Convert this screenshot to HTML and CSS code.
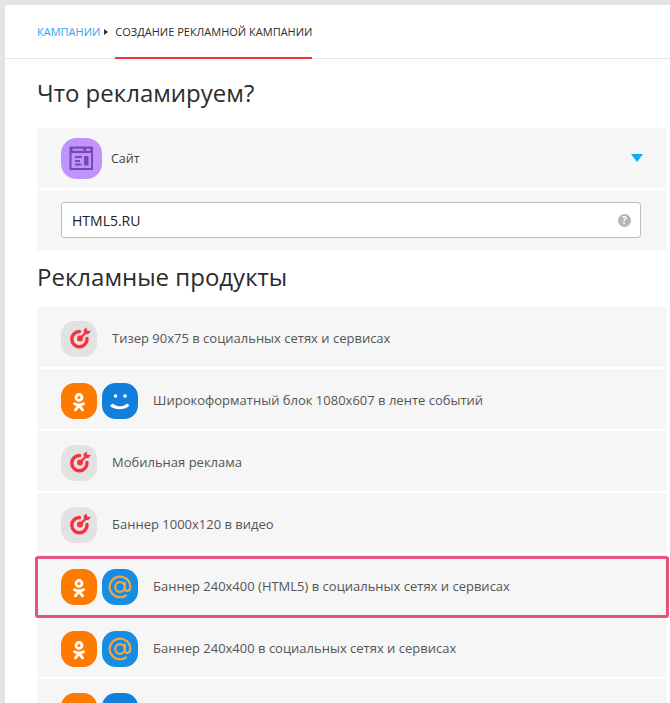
FILE: index.html
```html
<!DOCTYPE html>
<html lang="ru">
<head>
  <meta charset="UTF-8" />
  <meta name="viewport" content="width=device-width, initial-scale=1" />
  <title>Создание рекламной кампании</title>
  <link rel="stylesheet" href="styles.css">
</head>
<body>
  <div class="panel">
    <div class="crumbs">
      <a class="crumb-link">Кампании</a>
      <span class="crumb-arrow"></span>
      <span class="crumb-current">Создание рекламной кампании</span>
    </div>

    <div class="content">
      <h2>Что рекламируем?</h2>

      <div class="row row-select">
        <span class="icon icon-big icon-purple">
          <svg viewBox="0 0 41 41" width="41" height="41">
            <path fill="#7a45b5" fill-rule="evenodd" d="M8.500 8.500h23.500v23.500H8.500z M10.500 15v15h19.500V15z M11.500 10.800v2h11v-2z M25 10.800v2h4.500v-2z"/>
            <path fill="#7a45b5" d="M14 18h7v2h-7z M14 22h5v2h-5z M14 25.500h6.500v2H14z M23 18h4.500v9.500H23z"/>
          </svg>
        </span>
        <span class="row-text">Сайт</span>
        <span class="select-arrow"></span>
      </div>

      <div class="row row-input">
        <div class="url-box">
          <span class="url-value">HTML5.RU</span>
          <span class="hint">?</span>
        </div>
      </div>

      <h2 class="second">Рекламные продукты</h2>

      <div class="products">
        <div class="row">
          <span class="icon icon-grey">
            <svg viewBox="0 0 36 36" width="36" height="36"><use href="#target"/></svg>
          </span>
          <span class="row-text">Тизер 90x75 в социальных сетях и сервисах</span>
        </div>
        <div class="row">
          <span class="icon icon-orange">
            <svg viewBox="0 0 36 36" width="36" height="36"><use href="#ok"/></svg>
          </span>
          <span class="icon icon-blue-dark">
            <svg viewBox="0 0 36 36" width="36" height="36"><use href="#smile"/></svg>
          </span>
          <span class="row-text">Широкоформатный блок 1080x607 в ленте событий</span>
        </div>
        <div class="row">
          <span class="icon icon-grey">
            <svg viewBox="0 0 36 36" width="36" height="36"><use href="#target"/></svg>
          </span>
          <span class="row-text">Мобильная реклама</span>
        </div>
        <div class="row">
          <span class="icon icon-grey">
            <svg viewBox="0 0 36 36" width="36" height="36"><use href="#target"/></svg>
          </span>
          <span class="row-text">Баннер 1000x120 в видео</span>
        </div>
        <div class="row row-marked">
          <span class="icon icon-orange">
            <svg viewBox="0 0 36 36" width="36" height="36"><use href="#ok"/></svg>
          </span>
          <span class="icon icon-blue">
            <svg viewBox="0 0 36 36" width="36" height="36"><use href="#at"/></svg>
          </span>
          <span class="row-text">Баннер 240x400 (HTML5) в социальных сетях и сервисах</span>
        </div>
        <div class="row">
          <span class="icon icon-orange">
            <svg viewBox="0 0 36 36" width="36" height="36"><use href="#ok"/></svg>
          </span>
          <span class="icon icon-blue">
            <svg viewBox="0 0 36 36" width="36" height="36"><use href="#at"/></svg>
          </span>
          <span class="row-text">Баннер 240x400 в социальных сетях и сервисах</span>
        </div>
        <div class="row">
          <span class="icon icon-orange">
            <svg viewBox="0 0 36 36" width="36" height="36"><use href="#ok"/></svg>
          </span>
          <span class="icon icon-blue-dark">
            <svg viewBox="0 0 36 36" width="36" height="36"><use href="#smile"/></svg>
          </span>
        </div>
      </div>
    </div>
  </div>

  <svg class="defs" width="0" height="0">
    <defs>
      <g id="target">
        <path fill="none" stroke="#f7323f" stroke-width="3.400" stroke-linecap="round" d="M18.500 10.500A7.600 7.600 0 1 0 26 17.500"/>
        <path fill="none" stroke="#f7323f" stroke-width="2.400" stroke-linecap="round" d="M19 17.500L25.500 11"/>
        <circle cx="19" cy="17.500" r="3" fill="#f7323f"/>
        <path fill="#f7323f" d="M22.500 9l3-2.500.8 3.200 3.700.3-2.800 3.200-4-.5z"/>
      </g>
      <g id="ok" fill="none" stroke="#fff" stroke-width="2.800" stroke-linecap="round">
        <circle cx="18" cy="14.500" r="3"/>
        <path d="M13.500 20.800c3 1.700 6 1.700 9 0"/>
        <path d="M18 22.300l-3.600 4.500M18 22.300l3.600 4.500"/>
      </g>
      <g id="smile" fill="#fff">
        <circle cx="13.500" cy="13" r="1.800"/>
        <circle cx="23" cy="13" r="1.800"/>
        <path d="M8.500 22.500c1-1.200 1.800-1.800 2.800-1.600 4.400 3.200 9 3.200 13.400 0 1-.2 1.800.4 2.800 1.600-.8.100-1.300.6-1.600 1.600-5.400 3-11 3-16.800 0-.3-1-.8-1.500-1.600-1.600z"/>
      </g>
      <g id="at" fill="none" stroke="#f5a540" stroke-width="2.200">
        <circle cx="18" cy="18" r="4.800"/>
        <path stroke-linecap="round" d="M22.800 13.500v6c0 3.600 5.500 3.200 5.500-1.500A10.300 10.300 0 1 0 24 26.300"/>
      </g>
    </defs>
  </svg>
</body>
</html>
```

FILE: styles.css
```css
html, body {
  height: 100%;
}

body {
  margin: 0;
  padding: 5px 0 0 5px;
  box-sizing: border-box;
  overflow: hidden;
  background: #e4e4e4;
  font-family: "Open Sans", "Noto Sans", sans-serif;
  color: #333;
}

.panel {
  background: #fff;
  height: 100%;
  border-top-left-radius: 2px;
}

.crumbs {
  display: flex;
  align-items: center;
  box-sizing: border-box;
  height: 54px;
  padding-left: 32px;
  border-bottom: 1px solid #e6e6e6;
  font-size: 11px;
  text-transform: uppercase;
}

.crumb-link {
  color: #2ba4f0;
}

.crumb-arrow {
  width: 0;
  height: 0;
  margin: 0 7px 0 4px;
  border-left: 4px solid #333;
  border-top: 3px solid transparent;
  border-bottom: 3px solid transparent;
}

.crumb-current {
  align-self: stretch;
  display: flex;
  align-items: center;
  color: #2c2c2c;
  border-bottom: 2px solid #f7323f;
  margin-bottom: -1px;
}

.content {
  padding: 0 3px 0 32px;
}

h2 {
  margin: 0;
  padding: 17px 0 19px;
  font-size: 24px;
  line-height: 33px;
  font-weight: 400;
  color: #2c2c2c;
}

h2.second {
  padding: 8px 0 14px;
}

.row {
  display: flex;
  align-items: center;
  gap: 5px;
  box-sizing: border-box;
  height: 60px;
  padding-left: 24px;
  margin-bottom: 2px;
  background: #f6f6f6;
}

.products .row {
  padding-top: 4px;
}

.products .row-text {
  margin-bottom: 2px;
}

.row-text {
  font-size: 13px;
  color: #555;
  margin-left: 10px;
}

.icon {
  flex: none;
  display: flex;
  align-items: center;
  justify-content: center;
  width: 36px;
  height: 36px;
  border-radius: 38%;
}

.icon-big {
  width: 41px;
  height: 41px;
}

.icon-purple { background: #bf95fb; }
.icon-grey { background: #e2e2e2; }
.icon-orange { background: #ff7a00; }
.icon-blue { background: #168de2; }
.icon-blue-dark { background: #127fdc; }

.row-select .row-text {
  color: #444;
  font-size: 12.5px;
  margin-left: 4px;
}

.select-arrow {
  margin-left: auto;
  margin-right: 24px;
  width: 0;
  height: 0;
  border-left: 6px solid transparent;
  border-right: 6px solid transparent;
  border-top: 8px solid #0ab0f5;
}

.row-input {
  padding-right: 26px;
}

.url-box {
  flex: 1;
  display: flex;
  align-items: center;
  justify-content: space-between;
  box-sizing: border-box;
  height: 36px;
  padding: 0 9px 0 10px;
  background: #fff;
  border: 1px solid #bdbdbd;
  border-radius: 3px;
}

.url-value {
  font-size: 14px;
  color: #222;
}

.hint {
  width: 13px;
  height: 13px;
  border-radius: 50%;
  background: #b5b5b5;
  color: #fff;
  font-size: 10px;
  font-weight: 700;
  line-height: 13px;
  text-align: center;
}

.row-marked {
  position: relative;
}

.row-marked::after {
  content: "";
  position: absolute;
  left: -2px;
  right: -2px;
  top: 1px;
  bottom: -3px;
  border: 3px solid #e8507e;
  border-radius: 3px;
  pointer-events: none;
}

.defs {
  position: absolute;
}
```
